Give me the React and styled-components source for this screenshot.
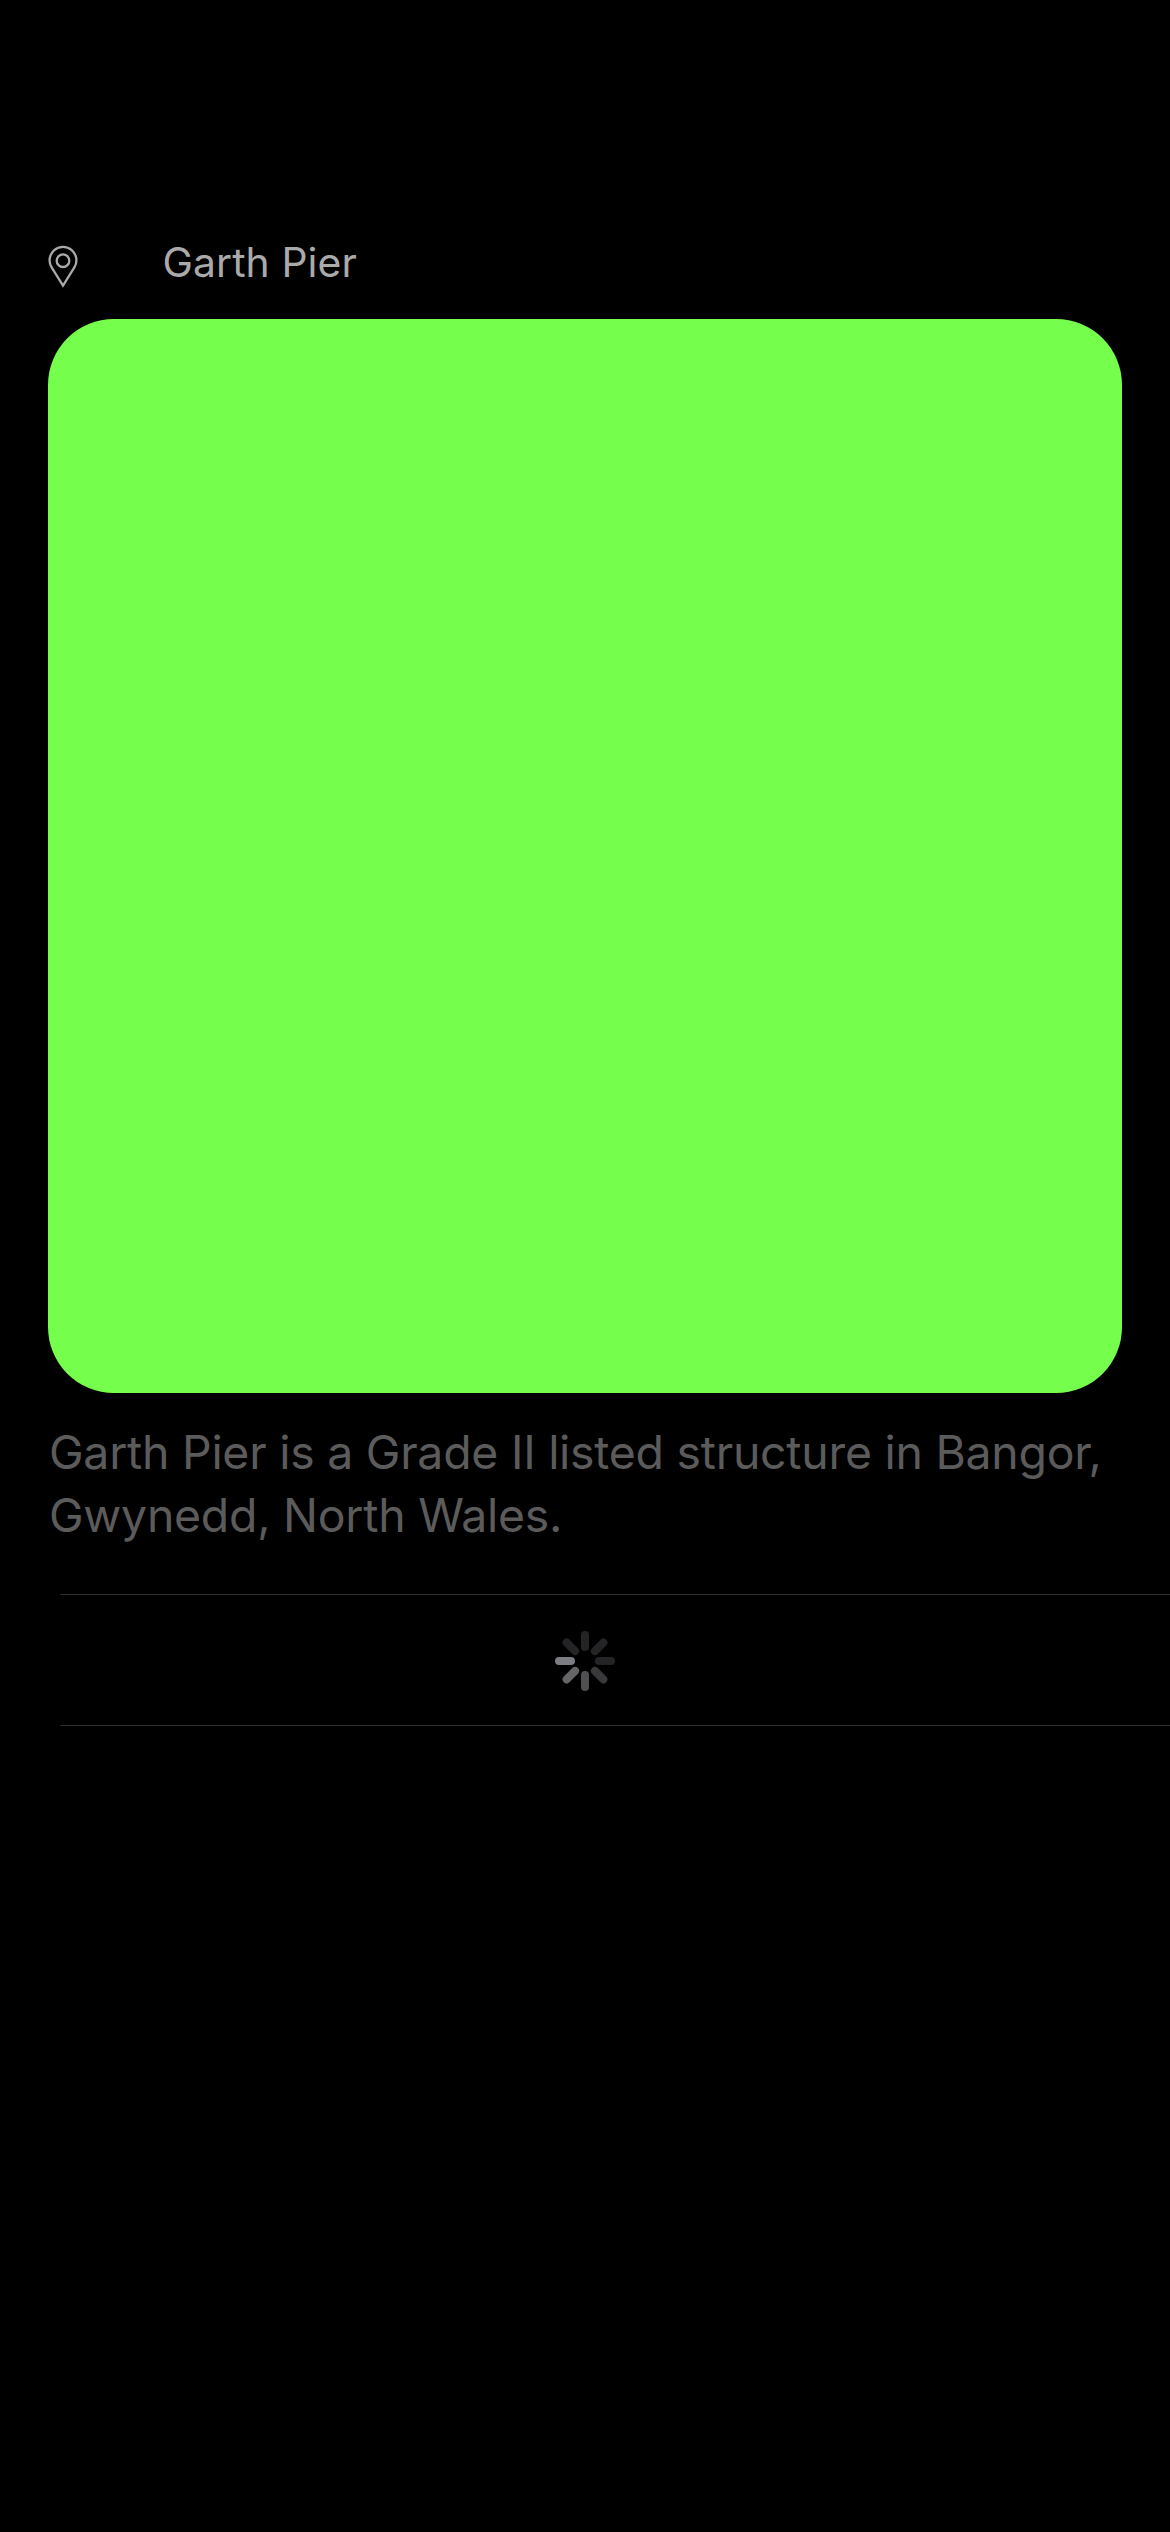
import React from "react";
import styled, { createGlobalStyle } from "styled-components";

const GlobalStyle = createGlobalStyle`
  html, body { margin: 0; background: #000; }
  * { box-sizing: border-box; }
`;

const Screen = styled.main`
  display: flex;
  flex-direction: column;
  width: 1170px;
  height: 2532px;
  padding-top: 231px;
  overflow: hidden;
  background: #000;
  font-family: Inter, "Liberation Sans", sans-serif;
`;

const LocationRow = styled.header`
  display: flex;
  align-items: center;
  height: 62px;
  padding-left: 48px;
`;

const PinIcon = styled.svg`
  width: 30px;
  height: 44px;
  margin-top: 10px;
  margin-right: 84.5px;
`;

const Title = styled.h1`
  margin: 0;
  font-size: 40.8px;
  font-weight: 400;
  line-height: 62px;
  letter-spacing: 0.1px;
  color: #aaa;
  white-space: nowrap;
`;

const Photo = styled.div`
  flex: none;
  width: 1074px;
  height: 1074px;
  margin: 26px 48px 0;
  border-radius: 66px;
  background: #75ff4c;
`;

const Description = styled.p`
  height: 126px;
  margin: 28px 48px 47px 49px;
  font-size: 46.4px;
  line-height: 63px;
  letter-spacing: -0.25px;
  color: #5b5b5b;
  white-space: nowrap;
`;

const LoadingRow = styled.section`
  display: flex;
  align-items: center;
  justify-content: center;
  height: 132px;
  margin-left: 60px;
  padding-right: 60px;
  border-top: 1px solid #2c2c2e;
  border-bottom: 1px solid #2c2c2e;
`;

const Spinner = styled.svg`
  width: 60px;
  height: 60px;
  margin-top: 2px;
`;

const spokes = [
  "#242426",
  "#242426",
  "#242426",
  "#39393b",
  "#505052",
  "#646469",
  "#7c7c83",
  "#242426",
];

export default function App() {
  return (
    <Screen>
      <GlobalStyle />
      <LocationRow>
        <PinIcon viewBox="0 0 30 44" fill="none" stroke="#aaa" strokeWidth="2.3">
          <path d="M15 40.6 L3.64 22.4 A13.4 13.4 0 1 1 26.36 22.4 Z" />
          <circle cx="15" cy="15.7" r="6.3" />
        </PinIcon>
        <Title>Garth Pier</Title>
      </LocationRow>
      <Photo />
      <Description>
        Garth Pier is a Grade II listed structure in Bangor,
        <br />
        Gwynedd, North Wales.
      </Description>
      <LoadingRow>
        <Spinner viewBox="0 0 60 60">
          {spokes.map((color, i) => (
            <rect
              key={i}
              x="26"
              y="0"
              width="8"
              height="20"
              rx="4"
              fill={color}
              transform={`rotate(${i * 45} 30 30)`}
            />
          ))}
        </Spinner>
      </LoadingRow>
    </Screen>
  );
}
